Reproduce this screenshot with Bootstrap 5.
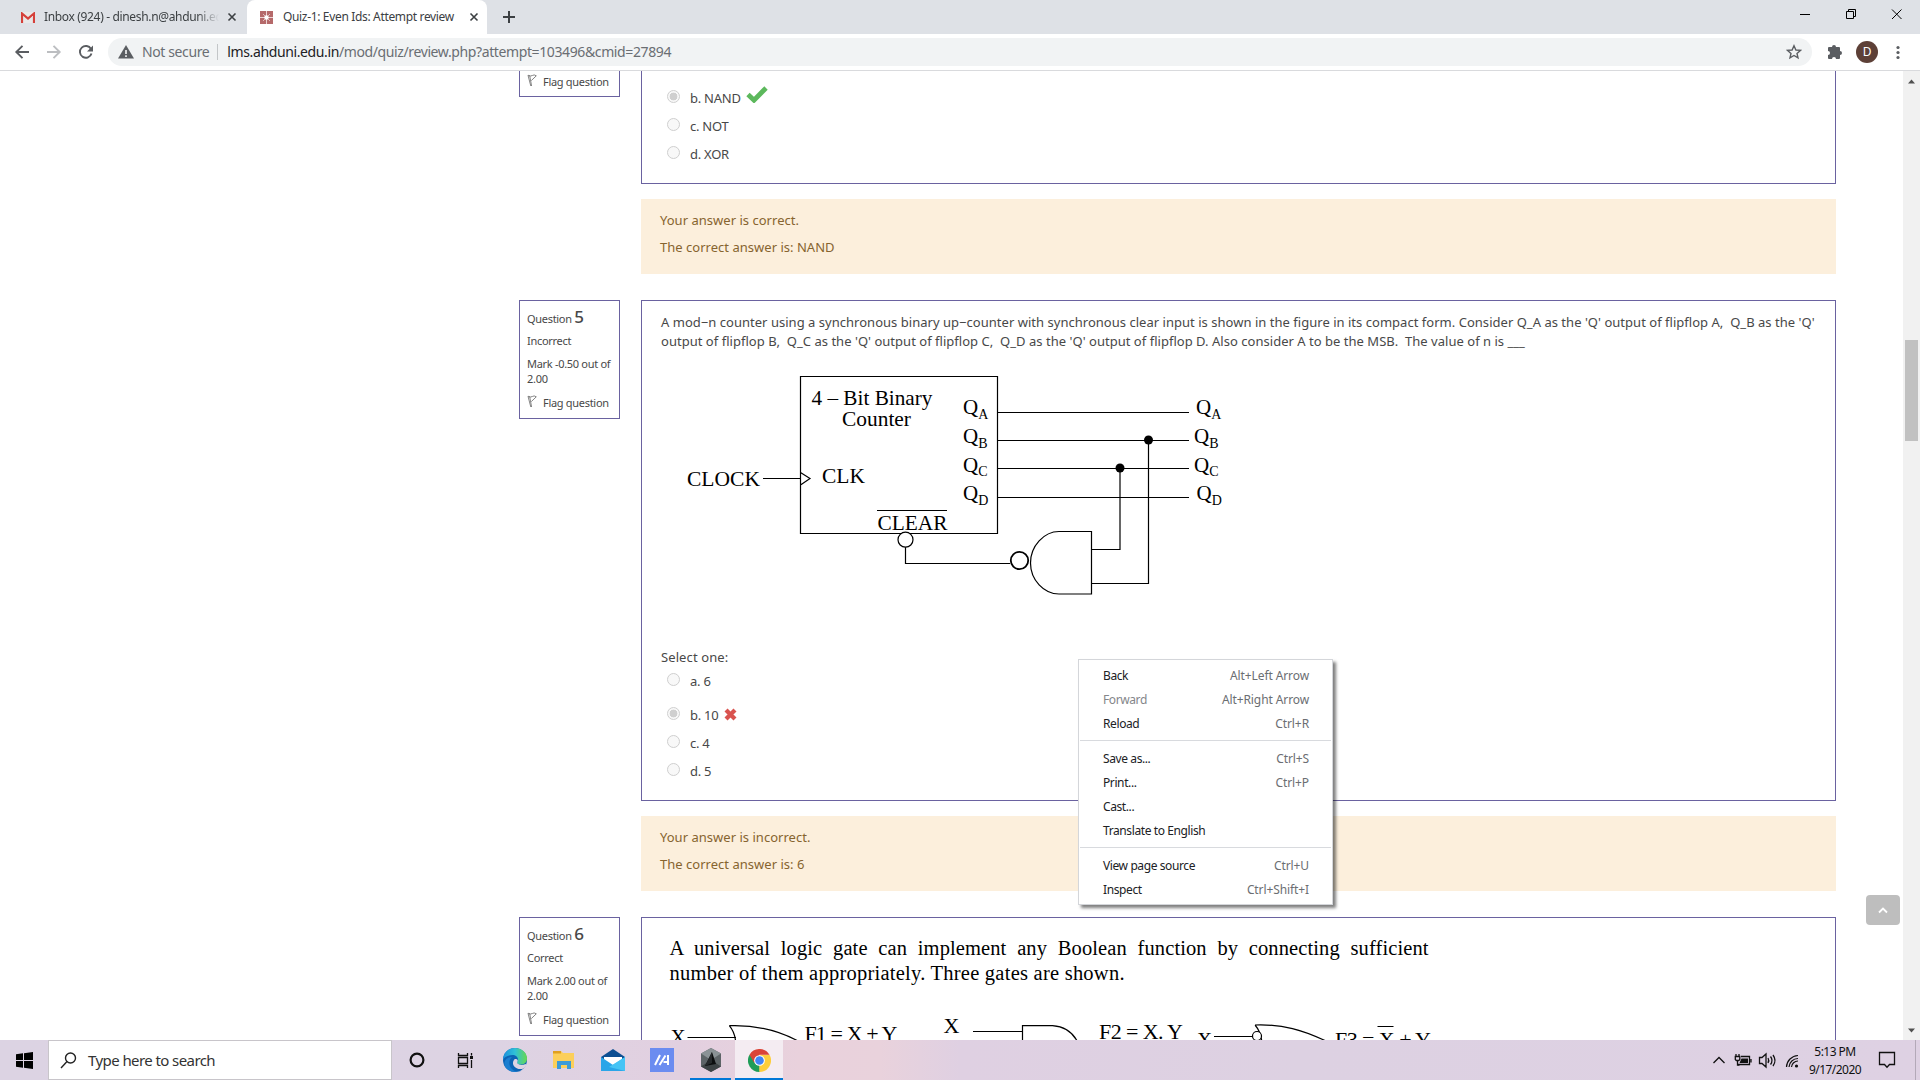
<!DOCTYPE html>
<html lang="en">
<head>
<meta charset="utf-8">
<title>Quiz-1: Even Ids: Attempt review</title>
<link href="https://cdn.jsdelivr.net/npm/bootstrap@5.3.0/dist/css/bootstrap.min.css" rel="stylesheet">
<style>
body{width:1920px;height:1080px;overflow:hidden;font-family:"Noto Sans",sans-serif;font-size:13px;line-height:19px;color:#484848;background:#fff}
svg{display:block;flex:none}
.ui{font-size:12px;letter-spacing:-.34px;color:#3c4043;line-height:16px}
/* browser chrome */
.tabstrip{height:34px;background:#dee1e6}
.btab{height:34px}
.btab-1{width:247px;padding-left:21px}
.btab-2{width:240px;padding-left:13px;background:#fff;border-radius:8px 8px 0 0}
.tabtitle{overflow:hidden;margin-left:10px}
.btab-1 .tabtitle{width:175px;margin-left:9px;-webkit-mask-image:linear-gradient(90deg,#000 153px,transparent 175px);mask-image:linear-gradient(90deg,#000 153px,transparent 175px)}
.btab-2 .tabtitle{width:182px}
.toolbar{height:37px;border-bottom:1px solid #d9dadd;padding-left:14px;padding-top:4px}
.omnibox{width:1704px;height:28px;background:#f1f3f4;border-radius:14px;margin-left:15px;padding:0 10px}
.omnibox span{font-size:14px;letter-spacing:-.385px}
.grey-url{color:#6a6e73}
.host{color:#202124}
.url{margin-left:1px}
.sep{height:16px}
.avatar{width:22px;height:22px;background:#5d4037;color:#fff;font-size:12px;margin:3px 0 0 14px}
/* page */
.viewport{height:969px}
.page{width:1903px;padding:0 67px 0 519px;overflow:hidden}
.question{gap:21px}
.fb + .question{margin-top:26px}
.info{width:101px;height:119px;flex:none;border:1px solid #6a62a0;padding:7.500px 0 0 7px;font-size:11px;letter-spacing:-.3px;line-height:15px;white-space:nowrap}
.info b{font-size:17px;font-weight:500;letter-spacing:0}
.info p{margin:0 0 8px}
.info p:first-child{margin-bottom:7.500px}
.info p:nth-child(3){margin-bottom:9px}
.flagline{gap:6px}
.info.cut{height:26px;padding-top:3px}
.body-box{flex:1;border:1px solid #6a62a0;overflow:hidden}
.b4{height:113px;padding-top:12px}
.b5{height:501px}
.b6{height:123px}
.opt{height:28px;padding-left:25px}
.opt i{width:13px;height:13px;border:1px solid #cfcfcf;border-radius:50%;background:#f8f8f8;margin:-2px 10px 0 0;flex:none}
.opt i.on{background:radial-gradient(circle,#cfcfcf 0 3.6px,#f8f8f8 4.2px)}
.opt span{letter-spacing:-.25px;padding-top:2px}
.tick{margin:-6px 0 0 5px}
.cross{margin-left:6px}
.gap-b{margin-top:6px}
.fb{margin:15px 0 0 122px;background:#fcefdc;color:#86642f;height:75px;padding:12px 19px;letter-spacing:.02px}
.fb p{margin:0 0 7.500px}
.qtext{padding:12px 0 0 19px;letter-spacing:.025px;white-space:pre}
.select{padding-left:19px;height:18px;letter-spacing:.1px}
svg text{font-family:"Liberation Serif",serif;fill:#000}
.sbar{width:17px;background:#f1f1f1;padding:6px 0}
.thumb{width:13px;height:101px;background:#c1c1c1;margin-top:255px}
.totop{position:absolute;left:1866px;top:895px;width:34px;height:30px;background:#bebebe;border-radius:4px}
/* context menu */
.ctx{position:absolute;left:1078px;top:659px;width:255px;height:246px;background:#fff;border:1px solid #d4d6da;box-shadow:3px 3px 3px rgba(0,0,0,.5);padding-top:4px;color:#202124}
.ctx .it{height:24px;padding:0 23px 2px 24px;font-size:12px;letter-spacing:-.4px}
.ctx .it span+span{color:#6b6e72;letter-spacing:-.1px}
.ctx .off{color:#84868a}
.ctx hr{margin:4px 1px 6px;border-top:1px solid #d8dade;opacity:1}
/* taskbar */
.taskbar{height:40px;background:linear-gradient(90deg,#dcd3e3 0,#ddd3e3 500px,#e2d0e0 680px,#e9d1dc 800px,#e9d2dc 880px,#dfd0e2 960px,#ddd1e2 1300px,#ded1e3 100%)}
.startbtn{width:48px}
.searchbox{width:344px;height:40px;background:#fff;border:1px solid #c8c5ca;padding-left:11px;gap:11px;font-size:15px;letter-spacing:-.58px;color:#333}
.tile{width:49px;height:40px}
.running{border-bottom:2px solid #0078d7;width:41px;margin:0 4px;padding-top:2px}
.tile.active-app{width:48px;background:#f4ecf2;border-bottom:2px solid #0078d7;padding-top:2px}
.clock{width:62px;padding-top:3px;line-height:18px;color:#111;letter-spacing:-.54px}
</style>
<script src="https://cdn.jsdelivr.net/npm/bootstrap@5.3.0/dist/js/bootstrap.bundle.min.js"></script>
</head>
<body>
<svg width="0" height="0" class="position-absolute"><defs>
<symbol id="flag" viewBox="0 0 10 13"><path d="M1 1.200L3.800 12M2.600 1.200L4.600 12M1 1.200q2.500 1.600 4.300.3t4 .3L4.300 6.600" fill="none" stroke="#777" stroke-width=".9"/></symbol>
<symbol id="x" viewBox="0 0 10 10"><path d="M1.500 1.500l7 7m0-7l-7 7" stroke="#3c4043" stroke-width="1.600"/></symbol>
</defs></svg>

<div class="tabstrip ui d-flex align-items-center">
  <div class="btab btab-1 d-flex align-items-center">
    <svg width="14" height="11" viewBox="0 0 14 11"><path d="M0 0h14v11H0z" fill="#e8e8e8"/><path d="M1 11V1.500l6 5 6-5V11" fill="none" stroke="#d5403a" stroke-width="2.200"/></svg>
    <div class="tabtitle text-nowrap">Inbox (924) - dinesh.n@ahduni.ed</div>
    <svg class="ms-2" width="10" height="10"><use href="#x"/></svg>
  </div>
  <div class="btab btab-2 d-flex align-items-center">
    <svg width="13" height="13" viewBox="0 0 13 13"><path d="M0 0h13v13H0z" fill="#b5696a"/><path d="M6.500 0v13M0 6.500h13" stroke="#ecd3d3" stroke-width="1"/><path d="M3 3l7 7m0-7l-7 7" stroke="#e0baba" stroke-width="1"/><circle cx="6.500" cy="6.500" r="2.200" fill="#fff"/></svg>
    <div class="tabtitle text-nowrap">Quiz-1: Even Ids: Attempt review</div>
    <svg class="ms-1" width="10" height="10"><use href="#x"/></svg>
  </div>
  <svg width="44" height="34" viewBox="487 0 44 34"><path d="M503 17h12M509 11v12" stroke="#3c4043" stroke-width="2"/></svg>
  <svg class="ms-auto" width="140" height="34" viewBox="1780 0 140 34" fill="none" stroke="#000"><path d="M1800 14.500h10M1846.500 11.500h7v7h-7zM1848.500 11.500v-2h7v7h-2M1892 9.500l9.500 9.500m0-9.500L1892 19"/></svg>
</div>

<div class="toolbar ui d-flex">
  <svg width="79" height="28" viewBox="14 38 79 28" fill="none" stroke-width="1.900"><path d="M29 52H16.500m6-6.200L16.300 52l6.200 6.200" stroke="#5a5d61"/><path d="M47 52h12.500m-6-6.200l6.200 6.200-6.200 6.200" stroke="#bcbec1"/><path d="M91 49a5.900 5.900 0 1 0 .5 4.500" stroke="#5a5d61"/><path d="M93 45.500v6h-6z" fill="#5a5d61" stroke="none"/></svg>
  <div class="omnibox d-flex align-items-center">
    <svg width="16" height="14" viewBox="0 0 16 14"><path d="M8 0l8 13.500H0z" fill="#5a5d61"/><path d="M8 5v4M8 10.300v1.600" stroke="#fff" stroke-width="1.500"/></svg>
    <span class="ms-2 grey-url">Not secure</span>
    <div class="vr sep mx-2 align-self-center"></div>
    <span class="text-nowrap url grey-url"><span class="host">lms.ahduni.edu.in</span>/mod/quiz/review.php?attempt=103496&amp;cmid=27894</span>
    <svg class="ms-auto" width="16" height="16" viewBox="0 0 16 16"><path d="M8 1.800l1.900 4.200 4.500.4-3.400 3 1 4.500L8 11.500l-4 2.400 1-4.500-3.400-3 4.500-.4z" fill="none" stroke="#5a5d61" stroke-width="1.400"/></svg>
  </div>
  <svg class="ms-3" width="14" height="28" viewBox="0 0 14 28"><path d="M0 10a1 1 0 0 1 1-1h3a2 2 0 1 1 4 0h3a1 1 0 0 1 1 1v3a2 2 0 1 1 0 4v3a1 1 0 0 1-1 1H8a2 2 0 1 0-4 0H1a1 1 0 0 1-1-1v-3a2 2 0 1 0 0-4z" fill="#5a5d61"/></svg>
  <div class="avatar rounded-circle d-flex align-items-center justify-content-center">D</div>
  <svg class="ms-auto me-3" width="12" height="28" fill="#5a5d61"><circle cx="6" cy="9.500" r="1.600"/><circle cx="6" cy="14.500" r="1.600"/><circle cx="6" cy="19.500" r="1.600"/></svg>
</div>

<div class="viewport d-flex">
<main class="page">
  <div class="question d-flex align-items-start">
    <div class="info cut border-top-0"><div class="flagline d-flex"><svg width="10" height="13"><use href="#flag"/></svg>Flag question</div></div>
    <div class="body-box b4 border-top-0">
      <div class="opt d-flex align-items-center"><i class="on"></i><span>b. NAND</span><svg class="tick" width="22" height="17" viewBox="0 0 22 17"><path d="M2 8.500L8 14.200 20 2" fill="none" stroke="#5cb85c" stroke-width="4.800"/></svg></div>
      <div class="opt d-flex align-items-center"><i></i><span>c. NOT</span></div>
      <div class="opt d-flex align-items-center"><i></i><span>d. XOR</span></div>
    </div>
  </div>
  <div class="fb"><p>Your answer is correct.</p><p>The correct answer is: NAND</p></div>

  <div class="question d-flex align-items-start">
    <div class="info">
      <p>Question <b>5</b></p><p>Incorrect</p><p>Mark -0.50 out of<br>2.00</p>
      <div class="flagline d-flex"><svg width="10" height="13"><use href="#flag"/></svg>Flag question</div>
    </div>
    <div class="body-box b5">
      <div class="qtext">A mod−n counter using a synchronous binary up−counter with synchronous clear input is shown in the figure in its compact form. Consider Q_A as the 'Q' output of flipflop A,  Q_B as the 'Q'
output of flipflop B,  Q_C as the 'Q' output of flipflop C,  Q_D as the 'Q' output of flipflop D. Also consider A to be the MSB.  The value of n is ___</div>
      <svg width="600" height="297" viewBox="642 351 600 297" fill="none" stroke="#000" stroke-width="1.200">
        <path d="M800.500 376.500h197v157h-197zM763 478.500h37.500M800.500 472.500l9.500 6-9.500 6.500M998 412.500h191M998 440.500h191M998 468.500h191M998 497.500h191M1148.500 440v143.500H1092M1120 468v81.500h-28M1059 531.500h32.500v62.500H1059c-15 0-28.500-14-28.500-31s13.500-31.500 28.500-31.500zM905.500 547v16.500H1010M877 510.500h70"/>
        <circle cx="905.500" cy="539.700" r="7.500" fill="#fff"/><circle cx="1019.500" cy="560.500" r="8.700" stroke-width="1.800" fill="#fff"/>
        <g fill="#000" stroke="none"><circle cx="1148.500" cy="440" r="4.500"/><circle cx="1120" cy="468" r="4.500"/></g>
        <g stroke="none" font-size="21">
          <text x="811.500" y="405" textLength="121" lengthAdjust="spacingAndGlyphs">4 – Bit Binary</text><text x="842" y="426" textLength="69" lengthAdjust="spacingAndGlyphs">Counter</text>
          <text x="687" y="486" textLength="73" lengthAdjust="spacingAndGlyphs">CLOCK</text><text x="822" y="483" textLength="43" lengthAdjust="spacingAndGlyphs">CLK</text><text x="877.500" y="530" textLength="70" lengthAdjust="spacingAndGlyphs">CLEAR</text>
          <text x="963" y="413.500">Q<tspan font-size="14" dy="5.500">A</tspan></text><text x="963" y="442.500">Q<tspan font-size="14" dy="5.500">B</tspan></text>
          <text x="963" y="471.500">Q<tspan font-size="14" dy="4.500">C</tspan></text><text x="963" y="499.500">Q<tspan font-size="14" dy="5.500">D</tspan></text>
          <text x="1196" y="413.500">Q<tspan font-size="14" dy="5.500">A</tspan></text><text x="1194" y="442.500">Q<tspan font-size="14" dy="5.500">B</tspan></text>
          <text x="1194" y="471.500">Q<tspan font-size="14" dy="4.500">C</tspan></text><text x="1196.500" y="499.500">Q<tspan font-size="14" dy="5.500">D</tspan></text>
        </g>
      </svg>
      <div class="select">Select one:</div>
      <div class="opt d-flex align-items-center"><i></i><span>a. 6</span></div>
      <div class="opt gap-b d-flex align-items-center"><i class="on"></i><span>b. 10</span><svg class="cross" width="13" height="13" viewBox="0 0 11 11"><path d="M1.700 1.700l7.600 7.600m0-7.600L1.700 9.300" stroke="#d9534f" stroke-width="3.600"/></svg></div>
      <div class="opt d-flex align-items-center"><i></i><span>c. 4</span></div>
      <div class="opt d-flex align-items-center"><i></i><span>d. 5</span></div>
    </div>
  </div>
  <div class="fb"><p>Your answer is incorrect.</p><p>The correct answer is: 6</p></div>

  <div class="question d-flex align-items-start">
    <div class="info">
      <p>Question <b>6</b></p><p>Correct</p><p>Mark 2.00 out of<br>2.00</p>
      <div class="flagline d-flex"><svg width="10" height="13"><use href="#flag"/></svg>Flag question</div>
    </div>
    <div class="body-box b6 border-bottom-0">
      <svg width="800" height="122" viewBox="642 918 800 122" fill="none" stroke="#000" stroke-width="1.200">
        <path d="M687.500 1037.500H736M729.300 1025.700c28-1 50 5 70 16M729.300 1025.700q6 7 6.500 18M973 1031.500h49M1022.500 1042v-16.300h30q17 1 25 16M1214 1036.500h38.500M1255 1025c28-1 48 5 72 16.500M1255 1025q6 7 7 18M1377.500 1026.500h16"/>
        <circle cx="1257" cy="1036" r="4.500" fill="#fff"/>
        <g stroke="none" font-size="20.500">
          <text x="669.500" y="955" word-spacing="5.500" textLength="759">A universal logic gate can implement any Boolean function by connecting sufficient</text>
          <text x="669.500" y="980" textLength="455">number of them appropriately. Three gates are shown.</text>
          <text x="670.500" y="1044" font-size="21">X</text><text x="804.500" y="1041" font-size="22" textLength="93">F1 = X + Y</text>
          <text x="943.500" y="1033" font-size="22">X</text><text x="1099" y="1039" font-size="22" textLength="84">F2 = X. Y</text>
          <text x="1197" y="1047" font-size="21">X</text><text x="1335" y="1047" font-size="22" textLength="96">F3 = X + Y</text>
        </g>
      </svg>
    </div>
  </div>
</main>
<aside class="sbar d-flex flex-column align-items-center">
  <svg width="9" height="8"><path d="M1 6.500h7L4.500 2.500z" fill="#505050"/></svg>
  <div class="thumb"></div>
  <svg class="mt-auto" width="9" height="8"><path d="M1 2.500h7L4.500 6.500z" fill="#505050"/></svg>
</aside>
</div>

<footer class="taskbar d-flex">
  <div class="startbtn d-flex align-items-center justify-content-center"><svg width="17" height="17" viewBox="0 0 17 17"><path d="M0 2.300l7-1v6.700H0zM8 1.200L17 0v8H8zM0 9h7v6.700l-7-1zM8 9h9v8l-9-1.200z"/></svg></div>
  <div class="searchbox d-flex align-items-center"><svg width="17" height="17" viewBox="0 0 17 17" fill="none" stroke="#222" stroke-width="1.400"><circle cx="10.500" cy="6" r="5"/><path d="M7 9.600L1 16"/></svg>Type here to search</div>
  <div class="tile d-flex align-items-center justify-content-center"><svg width="16" height="16"><circle cx="8" cy="8" r="6.400" fill="none" stroke="#111" stroke-width="2.200"/></svg></div>
  <div class="tile d-flex align-items-center justify-content-center"><svg width="18" height="17" viewBox="0 0 18 17" fill="none" stroke="#111" stroke-width="1.300"><path d="M1.500 1v2.500h9V1M1.500 5.500h9v6h-9zM1.500 16v-2.500h9V16M14.500 1v2.500M14.500 8v8"/><path d="M13 4h3v3h-3z" fill="#111" stroke="none"/></svg></div>
  <div class="tile d-flex align-items-center justify-content-center"><svg width="24" height="24" viewBox="0 0 24 24"><defs><linearGradient id="eg" x1="0" x2="1"><stop offset="0" stop-color="#1c8fdc"/><stop offset=".5" stop-color="#2fc0d8"/><stop offset="1" stop-color="#66d94f"/></linearGradient></defs><circle cx="12" cy="12" r="12" fill="#0c63b4"/><path d="M0 12C0 5 5.500 0 12 0s12 4.500 12 10.500c0 4-3 6-6 6-2.500 0-4-1-4-2s1-1 1-3c0-2.500-2.500-4.500-5.500-4.500C5 7 1 9 0 12z" fill="url(#eg)"/><path d="M14.500 15.500c1.500 1.500 5 2 8 .5l1 1c-1 2-2.500 3.200-3 3.500-6 2-11-2-10.500-6 0-1.500 1-3 2-3.500 3 0 3 1.500 2.500 2.500s-.5 1.500 0 2z" fill="#ddd3e3"/><path d="M9 9c-3 2.500-4 8 0 12s8 3 11 .5C17 25 8 25 3.500 20.500S2 9 9 9z" fill="#1b7ed0"/></svg></div>
  <div class="tile d-flex align-items-center justify-content-center"><svg width="22" height="20" viewBox="0 0 22 20"><path d="M0 1h8l2 2h11v15H0z" fill="#fccf5a"/><path d="M0 1h8v2.500H0z" fill="#e0a020"/><path d="M4 19v-8h14v8h-4v-4H8v4z" fill="#3d9bd8"/></svg></div>
  <div class="tile d-flex align-items-center justify-content-center"><svg width="24" height="24" viewBox="0 0 24 24"><path d="M0 9L12 1l12 8v4H0z" fill="#0d4f92"/><path d="M3 9h18v8H3z" fill="#fff"/><path d="M0 9l12 8 12-8v14H0z" fill="#2aa5e8"/><path d="M24 9L8 19l16 4z" fill="#45c4f5"/></svg></div>
  <div class="tile d-flex align-items-center justify-content-center"><svg width="24" height="24" viewBox="0 0 24 24"><path d="M0 0h24v24H0z" fill="#6b8cf0"/><path d="M5 17l5-10M9.500 17L15.500 7.500M13.500 14h5M18 7v10" stroke="#fff" stroke-width="2" fill="none"/></svg></div>
  <div class="tile running d-flex align-items-center justify-content-center"><svg width="22" height="24" viewBox="0 0 22 24"><path d="M11 0l10 5.500v13L11 24 1 18.500v-13z" fill="#5d6467"/><path d="M11 0l10 5.500L11 12 1 5.500z" fill="#8a9295"/><path d="M11 12l10 6.500L11 24 1 18.500z" fill="#3d4345"/><path d="M12 4l4 12-11 2z" fill="#0c0e0f"/><path d="M12 4L5 18l7-3z" fill="#25292b"/></svg></div>
  <div class="tile active-app d-flex align-items-center justify-content-center"><svg width="23" height="23" viewBox="0 0 24 24"><path d="M12 12L22.400 6A12 12 0 0 1 12 24z" fill="#fdce3c"/><path d="M12 12v12A12 12 0 0 1 1.600 6z" fill="#1f9d58"/><path d="M12 6h10.400L17 14.500 12 24 12 12z" fill="#fdce3c"/><path d="M12 6h10.400A12 12 0 0 0 1.600 6l5 8.500z" fill="#db4437"/><circle cx="12" cy="12" r="5.600" fill="#fff"/><circle cx="12" cy="12" r="4.500" fill="#4285f4"/></svg></div>
  <svg class="ms-auto" width="100" height="40" viewBox="1704 1040 100 40" fill="none" stroke="#111" stroke-width="1.300">
    <path d="M1713.500 1063l5.500-5.500 5.500 5.500"/><path d="M1741 1056.500h8.500v8h-11.500M1751 1059v3.500" /><path d="M1741.500 1058.500h6.500v4.500h-8.500z" fill="#111" stroke="none"/><path d="M1736 1054v2M1739 1054v2M1735.300 1056.500h4.500v3l-1 1h-2.500l-1-1zM1737.500 1060v5h2"/>
    <path d="M1759.500 1057.500h2.500l4-3.500v13l-4-3.500h-2.500zM1768 1058q1.500 2.500 0 5M1770.500 1056.500q3 4 0 8M1773 1055q4 5.500 0 11"/>
    <path d="M1786.500 1067a12 12 0 0 1 11.500-11.500M1789 1067a9 9 0 0 1 9-8.500M1791.500 1067a6.500 6.500 0 0 1 6.500-6" stroke-width="1.200"/><circle cx="1796.500" cy="1066" r="1.600" fill="#111" stroke="none"/>
  </svg>
  <div class="clock ui text-center">5:13 PM<br>9/17/2020</div>
  <svg width="54" height="40" viewBox="1866 1040 54 40" fill="none" stroke="#111" stroke-width="1.300"><path d="M1879.500 1052.500h15v12h-5l-2.500 2.800-2.500-2.800h-5z"/><path d="M1915.500 1040v40" stroke="#b3a9b8" stroke-width="1"/></svg>
</footer>

<div class="totop d-flex align-items-center justify-content-center"><svg width="12" height="8"><path d="M2 6.500l4-4 4 4" fill="none" stroke="#fff" stroke-width="1.800"/></svg></div>

<div class="ctx">
  <div class="it d-flex justify-content-between align-items-center"><span>Back</span><span>Alt+Left Arrow</span></div>
  <div class="it off d-flex justify-content-between align-items-center"><span>Forward</span><span>Alt+Right Arrow</span></div>
  <div class="it d-flex justify-content-between align-items-center"><span>Reload</span><span>Ctrl+R</span></div>
  <hr>
  <div class="it d-flex justify-content-between align-items-center"><span>Save as...</span><span>Ctrl+S</span></div>
  <div class="it d-flex justify-content-between align-items-center"><span>Print...</span><span>Ctrl+P</span></div>
  <div class="it d-flex align-items-center"><span>Cast...</span></div>
  <div class="it d-flex align-items-center"><span>Translate to English</span></div>
  <hr>
  <div class="it d-flex justify-content-between align-items-center"><span>View page source</span><span>Ctrl+U</span></div>
  <div class="it d-flex justify-content-between align-items-center"><span>Inspect</span><span>Ctrl+Shift+I</span></div>
</div>
</body>
</html>
